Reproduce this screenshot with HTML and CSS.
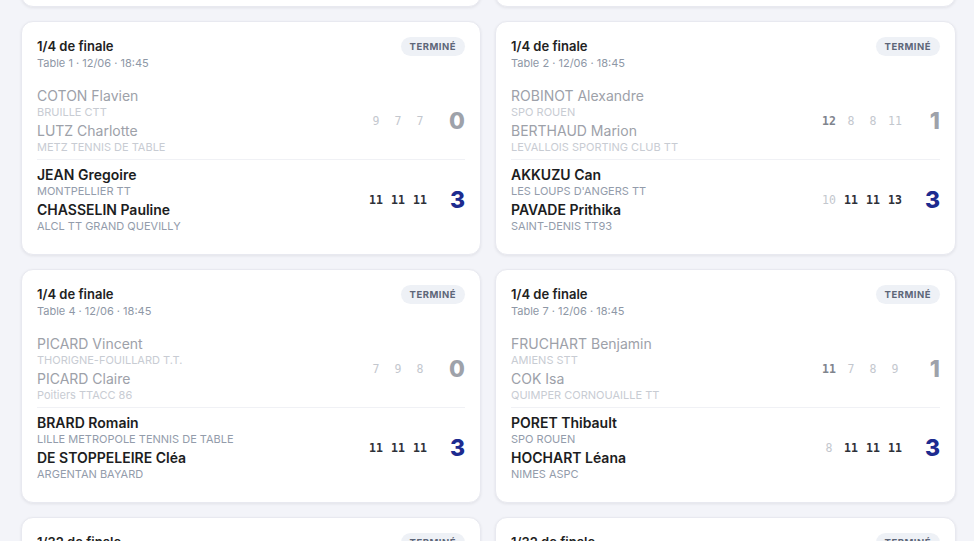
FILE: index.html
```html
<!doctype html>
<html lang=fr>
  <head>
    <meta charset=utf-8 />
    <title>Résultats</title>
    <link rel="stylesheet" href="styles.css">
  </head>
  <body>
    <main class="grid">

      <!-- row scrolled above the viewport -->
      <div class="card">
        <div class="card-head">
          <div><div class="round">1/4 de finale</div><div class="meta">Table 3 · 12/06 · 18:15</div></div>
          <span class="badge">Terminé</span>
        </div>
        <div class="team loser">
          <div class="players">
            <div class="player"><div class="name">MARTIN Lucas</div><div class="club">CAEN TTC</div></div>
            <div class="player"><div class="name">DUBOIS Emma</div><div class="club">TT JOUE LES TOURS</div></div>
          </div>
          <div class="sets"><span>6</span><span>9</span><span>8</span></div>
          <div class="total">0</div>
        </div>
        <div class="team winner">
          <div class="players">
            <div class="player"><div class="name">LEROY Hugo</div><div class="club">HENNEBONT TT</div></div>
            <div class="player"><div class="name">MOREAU Léa</div><div class="club">TT LYON</div></div>
          </div>
          <div class="sets"><span class="won">11</span><span class="won">11</span><span class="won">11</span></div>
          <div class="total">3</div>
        </div>
      </div>

      <div class="card">
        <div class="card-head">
          <div><div class="round">1/4 de finale</div><div class="meta">Table 5 · 12/06 · 18:15</div></div>
          <span class="badge">Terminé</span>
        </div>
        <div class="team loser">
          <div class="players">
            <div class="player"><div class="name">GIRARD Paul</div><div class="club">ISTRES TT</div></div>
            <div class="player"><div class="name">ROUX Chloé</div><div class="club">CP LYSSOIS</div></div>
          </div>
          <div class="sets"><span>5</span><span>8</span><span>9</span></div>
          <div class="total">0</div>
        </div>
        <div class="team winner">
          <div class="players">
            <div class="player"><div class="name">FAURE Nathan</div><div class="club">PONTOISE CERGY TT</div></div>
            <div class="player"><div class="name">BLANC Manon</div><div class="club">ANGERS VAILLANTE</div></div>
          </div>
          <div class="sets"><span class="won">11</span><span class="won">11</span><span class="won">11</span></div>
          <div class="total">3</div>
        </div>
      </div>

      <div class="card">
        <div class="card-head">
          <div><div class="round">1/4 de finale</div><div class="meta">Table 1 · 12/06 · 18:45</div></div>
          <span class="badge">Terminé</span>
        </div>
        <div class="team loser">
          <div class="players">
            <div class="player"><div class="name">COTON Flavien</div><div class="club">BRUILLE CTT</div></div>
            <div class="player"><div class="name">LUTZ Charlotte</div><div class="club">METZ TENNIS DE TABLE</div></div>
          </div>
          <div class="sets"><span>9</span><span>7</span><span>7</span></div>
          <div class="total">0</div>
        </div>
        <div class="team winner">
          <div class="players">
            <div class="player"><div class="name">JEAN Gregoire</div><div class="club">MONTPELLIER TT</div></div>
            <div class="player"><div class="name">CHASSELIN Pauline</div><div class="club">ALCL TT GRAND QUEVILLY</div></div>
          </div>
          <div class="sets"><span class="won">11</span><span class="won">11</span><span class="won">11</span></div>
          <div class="total">3</div>
        </div>
      </div>

      <div class="card">
        <div class="card-head">
          <div><div class="round">1/4 de finale</div><div class="meta">Table 2 · 12/06 · 18:45</div></div>
          <span class="badge">Terminé</span>
        </div>
        <div class="team loser">
          <div class="players">
            <div class="player"><div class="name">ROBINOT Alexandre</div><div class="club">SPO ROUEN</div></div>
            <div class="player"><div class="name">BERTHAUD Marion</div><div class="club">LEVALLOIS SPORTING CLUB TT</div></div>
          </div>
          <div class="sets"><span class="won">12</span><span>8</span><span>8</span><span>11</span></div>
          <div class="total">1</div>
        </div>
        <div class="team winner">
          <div class="players">
            <div class="player"><div class="name">AKKUZU Can</div><div class="club">LES LOUPS D'ANGERS TT</div></div>
            <div class="player"><div class="name">PAVADE Prithika</div><div class="club">SAINT-DENIS TT93</div></div>
          </div>
          <div class="sets"><span>10</span><span class="won">11</span><span class="won">11</span><span class="won">13</span></div>
          <div class="total">3</div>
        </div>
      </div>

      <div class="card">
        <div class="card-head">
          <div><div class="round">1/4 de finale</div><div class="meta">Table 4 · 12/06 · 18:45</div></div>
          <span class="badge">Terminé</span>
        </div>
        <div class="team loser">
          <div class="players">
            <div class="player"><div class="name">PICARD Vincent</div><div class="club">THORIGNE-FOUILLARD T.T.</div></div>
            <div class="player"><div class="name">PICARD Claire</div><div class="club">Poitiers TTACC 86</div></div>
          </div>
          <div class="sets"><span>7</span><span>9</span><span>8</span></div>
          <div class="total">0</div>
        </div>
        <div class="team winner">
          <div class="players">
            <div class="player"><div class="name">BRARD Romain</div><div class="club">LILLE METROPOLE TENNIS DE TABLE</div></div>
            <div class="player"><div class="name">DE STOPPELEIRE Cléa</div><div class="club">ARGENTAN BAYARD</div></div>
          </div>
          <div class="sets"><span class="won">11</span><span class="won">11</span><span class="won">11</span></div>
          <div class="total">3</div>
        </div>
      </div>

      <div class="card">
        <div class="card-head">
          <div><div class="round">1/4 de finale</div><div class="meta">Table 7 · 12/06 · 18:45</div></div>
          <span class="badge">Terminé</span>
        </div>
        <div class="team loser">
          <div class="players">
            <div class="player"><div class="name">FRUCHART Benjamin</div><div class="club">AMIENS STT</div></div>
            <div class="player"><div class="name">COK Isa</div><div class="club">QUIMPER CORNOUAILLE TT</div></div>
          </div>
          <div class="sets"><span class="won">11</span><span>7</span><span>8</span><span>9</span></div>
          <div class="total">1</div>
        </div>
        <div class="team winner">
          <div class="players">
            <div class="player"><div class="name">PORET Thibault</div><div class="club">SPO ROUEN</div></div>
            <div class="player"><div class="name">HOCHART Léana</div><div class="club">NIMES ASPC</div></div>
          </div>
          <div class="sets"><span>8</span><span class="won">11</span><span class="won">11</span><span class="won">11</span></div>
          <div class="total">3</div>
        </div>
      </div>

      <!-- next row, cut by the viewport -->
      <div class="card">
        <div class="card-head">
          <div><div class="round">1/32 de finale</div><div class="meta">Table 2 · 12/06 · 14:00</div></div>
          <span class="badge">Terminé</span>
        </div>
      </div>

      <div class="card">
        <div class="card-head">
          <div><div class="round">1/32 de finale</div><div class="meta">Table 6 · 12/06 · 14:00</div></div>
          <span class="badge">Terminé</span>
        </div>
      </div>

    </main>
  </body>
</html>
```

FILE: styles.css
```css
body {
  background: #f3f4f9;
  color: #1c1d21;
  font-family: Inter, 'Noto Sans', sans-serif;
  margin: 0;
  padding: 0;
  overflow: hidden;
}

.grid {
  display: grid;
  grid-template-columns: 460px 461px;
  gap: 14px;
  margin: -227px 0 0 21px;
}

.card {
  background: #fff;
  border: 1px solid #e8e9f0;
  border-radius: 12px;
  box-shadow: 0 1px 3px rgba(20, 24, 40, 0.08);
  padding: 15px 15px 16px;
}

.card-head {
  align-items: flex-start;
  display: flex;
  justify-content: space-between;
  margin-bottom: 10px;
}

.round {
  color: #222;
  font-size: 13px;
  font-weight: 600;
  line-height: 18px;
}

.meta {
  color: #8e97a6;
  font-size: 11px;
  line-height: 16px;
}

.badge {
  background: #eef1f6;
  border-radius: 10px;
  color: #5d6678;
  font-size: 9.5px;
  font-weight: 700;
  letter-spacing: 0.5px;
  line-height: 19px;
  padding: 0 9px;
  text-transform: uppercase;
}

.team {
  align-items: center;
  display: flex;
  padding: 6px 0 5px;
}
.team + .team { border-top: 1px solid #f0f1f5; }

.players {
  display: flex;
  flex: 1;
  flex-direction: column;
  gap: 3px;
}

.name {
  font-size: 14px;
  line-height: 18px;
}

.club {
  font-size: 11px;
  line-height: 14px;
}

.loser .name { color: #9da1a9; }
.loser .club { color: #c8ccd3; }
.winner .name { color: #1c1d21; font-weight: 600; }
.winner .club { color: #939cab; }

.sets {
  display: flex;
  font-family: 'DejaVu Sans Mono', monospace;
  font-size: 11.5px;
}
.sets span {
  color: #c3c7ce;
  text-align: center;
  width: 22px;
}
.sets span.won {
  color: #2e3038;
  font-weight: 700;
}
.loser .sets span.won { color: #7f848d; }

.total {
  font-size: 23px;
  font-weight: 800;
  margin-left: 14px;
  text-align: right;
  width: 20px;
}
.loser .total { color: #9ea2aa; }
.winner .total { color: #1d2b8f; }
```
